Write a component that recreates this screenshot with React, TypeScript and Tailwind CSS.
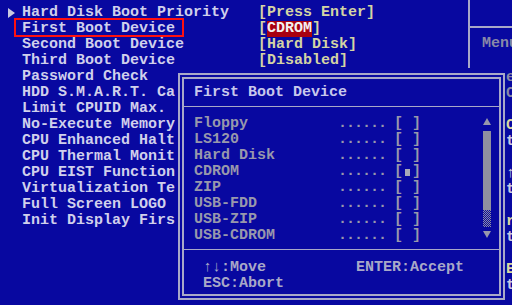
import React from 'react';

const SETTINGS = [
    { name: 'Hard Disk Boot Priority', value: 'Press Enter', arrow: true },
    { name: 'First Boot Device', value: 'CDROM', selected: true },
    { name: 'Second Boot Device', value: 'Hard Disk' },
    { name: 'Third Boot Device', value: 'Disabled' },
    { name: 'Password Check' },
    { name: 'HDD S.M.A.R.T. Ca' },
    { name: 'Limit CPUID Max.' },
    { name: 'No-Execute Memory' },
    { name: 'CPU Enhanced Halt' },
    { name: 'CPU Thermal Monit' },
    { name: 'CPU EIST Function' },
    { name: 'Virtualization Te' },
    { name: 'Full Screen LOGO' },
    { name: 'Init Display Firs' },
];

const DEVICES = ['Floppy', 'LS120', 'Hard Disk', 'CDROM', 'ZIP', 'USB-FDD', 'USB-ZIP', 'USB-CDROM'];

// help text peeking out at the right edge, behind the popup
const HELP = [
    { c: 'e', color: 'text-[#8888a8]' },
    { c: 'C', color: 'text-[#8888a8]' },
    { c: '' },
    { c: 'C', color: 'text-[#d8d8a0]' },
    { c: 't', color: 'text-[#c8c8e0]' },
    { c: '' },
    { c: '↑', color: 'text-[#c8c8e0]' },
    { c: 't', color: 'text-[#c8c8e0]' },
    { c: '' },
    { c: 'r', color: 'text-[#d8d8a0]' },
    { c: 't', color: 'text-[#c8c8e0]' },
    { c: '' },
    { c: 'E', color: 'text-[#d8d8a0]' },
    { c: 't', color: 'text-[#c8c8e0]' },
];

const App: React.FC = () => {
    return (
        <div className="relative w-[512px] h-[305px] overflow-hidden bg-[#0808a0] font-['Liberation_Mono',monospace] text-[15px] leading-4 font-bold">
            <div className="flex h-full">
                {/* Settings list */}
                <div className="w-[468px] shrink-0 pt-[5px]">
                    {SETTINGS.map((s) => (
                        <div key={s.name} className="flex h-4 whitespace-pre">
                            <div className="w-[22px] flex items-center justify-center">
                                {s.arrow && (
                                    <svg width="7" height="10" viewBox="0 0 7 10">
                                        <path d="M0 0 L7 5 L0 10 Z" fill="#c8c8e0" />
                                    </svg>
                                )}
                            </div>
                            <div className="w-[236px] text-[#d0d0ec]">
                                <span className="relative inline-block h-4">
                                    {s.name}
                                    {s.selected && (
                                        <span className="absolute -left-[8px] -right-[9px] -top-[3px] bottom-0 border-2 border-[#ff1010]" />
                                    )}
                                </span>
                            </div>
                            {s.value && (
                                <div className="text-[#d4d4a4]">
                                    [
                                    {s.selected ? (
                                        <span className="inline-block h-4 bg-[#a80010] text-[#f4f0f0]">{s.value}</span>
                                    ) : (
                                        s.value
                                    )}
                                    ]
                                </div>
                            )}
                        </div>
                    ))}
                </div>

                {/* Help panel */}
                <div className="flex-1 flex flex-col whitespace-pre">
                    <div className="h-[68px] border-l-2 border-[#a8a8c8]">
                        <div className="h-[28px] border-b-2 border-[#a8a8c8]" />
                        <div className="pl-[12px] pt-[8px] text-[#8888a8]">Menu Level</div>
                    </div>
                    <div className="pl-[38px] pt-[2px]">
                        {HELP.map((h, i) => (
                            <div key={i} className={`h-4 ${h.color ?? ''}`}>{h.c}</div>
                        ))}
                    </div>
                </div>
            </div>

            {/* First Boot Device popup */}
            <div className="absolute left-[178px] top-[73px] w-[327px] h-[227px] border-2 border-[#a8a8c8] bg-[#0808a0] p-[2px]">
                <div className="h-full border-2 border-[#a8a8c8] flex flex-col whitespace-pre">
                    <div className="h-[28px] border-b border-[#a8a8c8] pl-[10px] pt-[6px] text-[#c8c8ec]">
                        First Boot Device
                    </div>

                    <div className="relative flex h-[143px] border-b border-[#a8a8c8]">
                        <div className="flex-1 pl-[10px] pt-[9px] text-[#9898ac]">
                            {DEVICES.map((d) => (
                                <div key={d} className="flex h-4">
                                    <span className="w-[144px]">{d}</span>
                                    <span className="w-[48px] tracking-[-1px]">......</span>
                                    <span className="ml-[8px] flex items-center">
                                        [
                                        <span className="w-[9px] flex justify-center">
                                            {d === 'CDROM' && <span className="w-[5px] h-[7px] bg-[#a8a8b8]" />}
                                        </span>
                                        ]
                                    </span>
                                </div>
                            ))}
                        </div>

                        {/* Scrollbar */}
                        <div className="w-[8px] mr-[8px] pt-[11px] flex flex-col items-center">
                            <svg width="8" height="7" viewBox="0 0 8 7">
                                <path d="M4 0 L8 7 L0 7 Z" fill="#9898ac" />
                            </svg>
                            <div className="mt-[6px] w-[8px] h-[79px] bg-[#9090a0]" />
                            <div className="w-[8px] h-[17px] bg-[conic-gradient(#9090a0_25%,#0808a0_0_50%,#9090a0_0_75%,#0808a0_0)] bg-[length:2px_2px]" />
                            <svg className="mt-[4px]" width="8" height="7" viewBox="0 0 8 7">
                                <path d="M0 0 L8 0 L4 7 Z" fill="#9898ac" />
                            </svg>
                        </div>
                    </div>

                    <div className="pl-[19px] pt-[10px] text-[#a8a8c8] grid grid-cols-[153px_1fr]">
                        <div className="h-4">↑↓:Move</div>
                        <div className="h-4">ENTER:Accept</div>
                        <div className="h-4">ESC:Abort</div>
                    </div>
                </div>
            </div>
        </div>
    );
};

export default App;
